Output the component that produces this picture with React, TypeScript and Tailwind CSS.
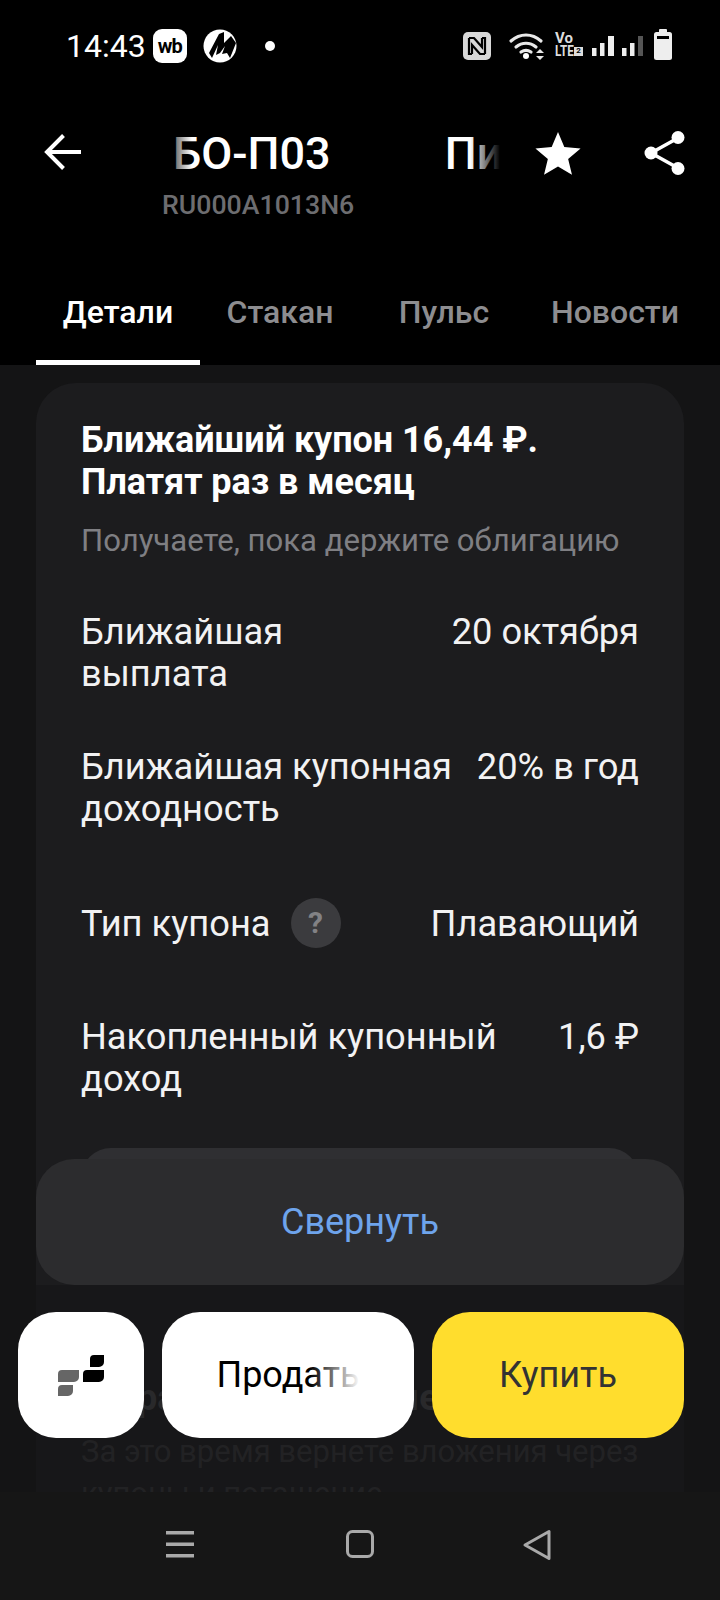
import * as React from "react"

const font = { fontFamily: "Roboto, sans-serif" }

// ── Status bar ────────────────────────────────────────────────────────────────

function WbIcon() {
  return (
    <div className="flex h-[34px] w-[34px] items-center justify-center rounded-[9px] bg-white text-[20px] font-bold leading-none tracking-[-1px] text-black">
      wb
    </div>
  )
}

function MIcon() {
  return (
    <svg width="34" height="34" viewBox="0 0 34 34" className="ml-[16px]">
      <circle cx="17" cy="17" r="16.500" fill="#fff" />
      <path d="M6 24 L16 5 L21 3 L21 14 L28 7 L33 14 L27 29 L24 24 L19 25 L22 17 L17 24 L13 26 L15 16 L9 29 Z" fill="#000" />
    </svg>
  )
}

function StatusIcons() {
  return (
    <svg width="209" height="34" viewBox="0 0 209 34" fill="#eee">
      {/* nfc */}
      <rect x="0" y="3" width="28" height="28" rx="5" fill="#d8d8d8" />
      <path d="M6 9h5l8 9V9M22 25h-5l-8-9v9M6 9v16h3M22 25V9h-3" stroke="#000" strokeWidth="2.200" fill="none" />
      {/* wifi */}
      <path d="M48 12c9-8 21-8 30 0M53 18c6-5 14-5 20 0M58 23c3-2 7-2 10 0" stroke="#e8e8e8" strokeWidth="3.200" fill="none" strokeLinecap="round" />
      <circle cx="63" cy="27" r="3" fill="#fff" />
      <path d="M73 24l4-4 4 4zM73 27l4 4 4-4z" fill="#e8e8e8" />
      {/* signal 1 */}
      <rect x="129" y="19" width="4.500" height="8" />
      <rect x="137" y="14" width="4.500" height="13" />
      <rect x="145" y="7" width="6" height="20" />
      {/* signal 2 */}
      <rect x="159" y="19" width="4.500" height="8" />
      <rect x="167" y="14" width="4.500" height="13" />
      <rect x="175" y="7" width="5" height="20" fill="#555" />
      {/* battery */}
      <rect x="191" y="3" width="18" height="28" rx="2.500" />
      <rect x="196" y="0" width="8" height="4" rx="1" />
      <rect x="194" y="7" width="12" height="3" fill="#000" />
    </svg>
  )
}

function VolteBadge() {
  return (
    <div className="absolute left-[92px] top-[3px] font-bold text-[#ddd]">
      <div className="text-[15px] leading-[13px]">Vo</div>
      <div className="flex items-center">
        <span className="w-[19px] origin-left scale-x-[0.78] text-[15px] leading-[13px]">LTE</span>
        <span className="flex h-[9px] w-[9px] items-center justify-center bg-[#ddd] text-[8px] leading-none text-black">2</span>
      </div>
    </div>
  )
}

function StatusBar() {
  return (
    <div className="flex h-[90px] items-center bg-black pl-[66px] pr-[48px] pt-[1px] text-white">
      <span className="mr-[7px] text-[32px] leading-none">14:43</span>
      <WbIcon />
      <MIcon />
      <div className="ml-[28px] h-[10px] w-[10px] rounded-full bg-white" />
      <div className="relative ml-auto">
        <StatusIcons />
        <VolteBadge />
      </div>
    </div>
  )
}

// ── Header + tabs ─────────────────────────────────────────────────────────────

function Header() {
  return (
    <div className="flex h-[182px] items-start bg-black pt-[38px]">
      <svg width="38" height="38" viewBox="0 0 38 38" className="ml-[44px] mt-[5px] shrink-0" fill="none" stroke="#fff" strokeWidth="4">
        <path d="M37 19H4M19.500 2.500L3 19l16.500 16.500" />
      </svg>
      <div className="ml-[80px] flex w-[338px] shrink-0 flex-col">
        <div className="relative h-[52px] overflow-hidden whitespace-nowrap text-[45px] font-medium leading-[52px] text-white">
          <div className="flex gap-[114px] pl-[11px]">
            <span>БО-П03</span>
            <span>Пионер-Лизинг</span>
          </div>
          <div className="absolute inset-y-0 left-0 w-[30px] bg-linear-to-r from-black to-transparent" />
          <div className="absolute inset-y-0 right-0 w-[30px] bg-linear-to-l from-black to-transparent" />
        </div>
        <span className="mt-[10px] text-[26.700px] font-medium leading-[30px] text-[#6d6d70]">RU000A1013N6</span>
      </div>
      <svg width="46" height="44" viewBox="0 0 24 23" className="ml-[35px] mt-[4px] shrink-0" fill="#fff">
        <path d="M12 0l3.300 7.900 8.500.7-6.500 5.500 2 8.300L12 18l-7.300 4.400 2-8.300L.2 8.600l8.500-.7z" />
      </svg>
      <svg width="42" height="46" viewBox="0 0 42 46" className="ml-[63px] mt-[2px] shrink-0" fill="#fff">
        <path d="M34 8L7 23l27 15" stroke="#fff" strokeWidth="3.500" fill="none" />
        <circle cx="34" cy="7.500" r="6.500" />
        <circle cx="7" cy="23" r="6.500" />
        <circle cx="34" cy="38.500" r="6.500" />
      </svg>
    </div>
  )
}

const tabs = [
  { label: "Детали", width: "w-[164px]", active: true },
  { label: "Стакан", width: "w-[160px]", active: false },
  { label: "Пульс", width: "w-[168px]", active: false },
  { label: "Новости", width: "w-[174px]", active: false },
]

function Tabs() {
  return (
    <div className="flex h-[93px] bg-black pl-[36px]">
      {tabs.map((t) => (
        <div
          key={t.label}
          className={`flex ${t.width} shrink-0 justify-center border-b-[5px] pt-[22px] text-[32px] font-medium leading-[36px] ${
            t.active ? "border-white text-white" : "border-transparent text-[#8d8d90]"
          }`}
        >
          {t.label}
        </div>
      ))}
    </div>
  )
}

// ── Coupon card ───────────────────────────────────────────────────────────────

function HelpBadge() {
  return (
    <span className="ml-[20px] mt-[-1px] flex h-[50px] w-[50px] shrink-0 items-center justify-center rounded-full bg-[#3b3b3e] text-[30px] font-bold text-[#828285]">
      ?
    </span>
  )
}

function Row({ label, value, className }: { label: React.ReactNode; value: string; className: string }) {
  return (
    <div className={`flex items-start justify-between gap-[24px] leading-[42px] text-[#f2f2f3] ${className}`}>
      <div>{label}</div>
      <div className="shrink-0">{value}</div>
    </div>
  )
}

function CouponCard() {
  return (
    <div className="mx-[36px] mt-[18px] h-[1200px] rounded-t-[40px] bg-[#1c1c1e] px-[45px] pt-[36px] text-[36.250px]">
      <h3 className="text-[36px] font-bold leading-[42px] tracking-[-0.05px] text-white">
        Ближайший купон 16,44 ₽.
        <br />
        Платят раз в месяц
      </h3>
      <p className="mt-[17px] text-[31.100px] leading-[42px] text-[#7f7f83]">Получаете, пока держите облигацию</p>
      <Row className="mt-[49px]" label={<>Ближайшая<br />выплата</>} value="20 октября" />
      <Row className="mt-[51px]" label={<>Ближайшая купонная<br />доходность</>} value="20% в год" />
      <div className="mt-[69px] flex items-center justify-between leading-[42px] text-[#f2f2f3]">
        <div className="flex items-center">
          Тип купона
          <HelpBadge />
        </div>
        <div>Плавающий</div>
      </div>
      <Row className="mt-[68px]" label={<>Накопленный купонный<br />доход</>} value="1,6 ₽" />
      <div className="mt-[48px] h-[120px] rounded-[30px] bg-[#2f2f32]" />
      <h4 className="mt-[109px] whitespace-nowrap text-[36px] font-bold leading-[42px] text-[#4a4a4c]">Дюрация 2 года 9 месяцев</h4>
      <p className="mt-[12px] whitespace-nowrap text-[31px] leading-[42px] text-[#39393b]">
        За это время вернете вложения через
        <br />
        купоны и погашение
      </p>
    </div>
  )
}

// ── Floating actions ──────────────────────────────────────────────────────────

function LogoMark() {
  return (
    <svg width="46" height="41" viewBox="0 0 46 41">
      <path d="M0 19a4 4 0 0 1 4-4h17v7a5 5 0 0 1-5 5H0zM0 34a4 4 0 0 1 4-4h11v6a5 5 0 0 1-5 5H0z" fill="#666" />
      <path d="M25 19a4 4 0 0 1 4-4h17v7a5 5 0 0 1-5 5H25zM32 4a4 4 0 0 1 4-4h10v7a5 5 0 0 1-5 5h-9z" fill="#000" />
    </svg>
  )
}

function Actions() {
  return (
    <>
      <div className="absolute inset-x-0 bottom-0 top-[920px] bg-[#141415]/60" />
      <div className="absolute left-[36px] right-[36px] top-[794px] flex h-[126px] items-center justify-center rounded-[38px] bg-[#2c2c2e] text-[36px] text-[#6ea4ec]">
        Свернуть
      </div>
      <div className="absolute left-[18px] right-[36px] top-[947px] flex h-[126px] gap-[18px] text-[36px]">
        <div className="flex w-[126px] items-center justify-center rounded-[38px] bg-white">
          <LogoMark />
        </div>
        <div className="relative flex w-[252px] items-center justify-center rounded-[38px] bg-white text-black">
          <span className="relative">
            Продать
            <span className="absolute inset-y-0 right-0 w-[50px] bg-linear-to-r from-transparent to-white" />
          </span>
        </div>
        <div className="flex w-[252px] items-center justify-center rounded-[38px] bg-[#ffdd2d] text-[#333]">Купить</div>
      </div>
    </>
  )
}

// ── Android nav ───────────────────────────────────────────────────────────────

function NavBar() {
  return (
    <div className="relative flex h-[108px] shrink-0 items-start bg-[#161616] pt-[38px]">
      <div className="flex w-[360px] pl-[166px]">
        <svg width="28" height="28" viewBox="0 0 28 28" fill="#a9a9a9">
          <rect x="0" y="1" width="28" height="3.500" />
          <rect x="0" y="12.500" width="28" height="3.500" />
          <rect x="0" y="24" width="28" height="3.500" />
        </svg>
      </div>
      <svg width="28" height="28" viewBox="0 0 28 28" fill="none" className="-ml-[14px]">
        <rect x="1.500" y="1.500" width="25" height="25" rx="5" stroke="#a9a9a9" strokeWidth="3" />
      </svg>
      <svg width="30" height="32" viewBox="0 0 30 32" fill="none" className="ml-[148px] -mt-[1px]">
        <path d="M27 2.500v27L3 16z" stroke="#a9a9a9" strokeWidth="3" strokeLinejoin="round" />
      </svg>
    </div>
  )
}

export default function App() {
  return (
    <div className="flex h-[1600px] w-[720px] flex-col overflow-hidden bg-black" style={font}>
      <StatusBar />
      <Header />
      <Tabs />
      <div className="relative flex-1 overflow-hidden bg-[#141415]">
        <CouponCard />
        <Actions />
      </div>
      <NavBar />
    </div>
  )
}
